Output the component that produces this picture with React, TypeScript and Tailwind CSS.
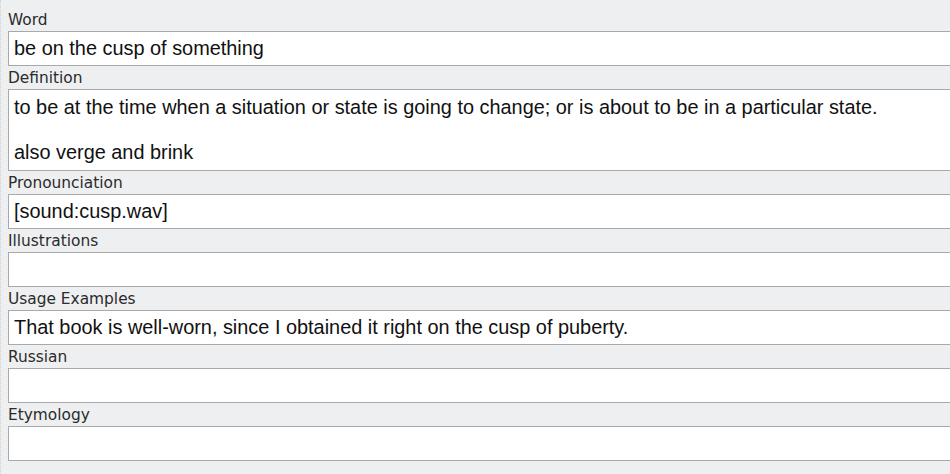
const fields: { label: string; lines: string[] }[] = [
  { label: "Word", lines: ["be on the cusp of something"] },
  {
    label: "Definition",
    lines: [
      "to be at the time when a situation or state is going to change; or is about to be in a particular state.",
      "",
      "also verge and brink",
    ],
  },
  { label: "Pronounciation", lines: ["[sound:cusp.wav]"] },
  { label: "Illustrations", lines: [] },
  {
    label: "Usage Examples",
    lines: ["That book is well-worn, since I obtained it right on the cusp of puberty."],
  },
  { label: "Russian", lines: [] },
  { label: "Etymology", lines: [] },
];

function Field({ label, lines }: { label: string; lines: string[] }) {
  const multi = lines.length > 1;
  return (
    <div>
      <div className="h-[23px] pt-[3px] font-['DejaVu_Sans',sans-serif] text-[15.4px] leading-[19px] text-[#2b2b2b]">
        {label}
      </div>
      <div
        className={
          "-mr-4 border border-[#a9a9a9] bg-white pl-[5px] font-['Liberation_Sans',Arial,sans-serif] text-[19.9px] leading-[22.5px] text-[#111] " +
          (multi ? "py-[6px]" : "h-[35px] pt-[5px]")
        }
      >
        {lines.map((line, i) => (
          <div key={i} className="h-[22.5px] whitespace-nowrap">
            {line}
          </div>
        ))}
      </div>
    </div>
  );
}

export default function App() {
  return (
    <div className="h-[474px] w-[950px] overflow-hidden border-l border-dotted border-[#cfd0d3] bg-[#eeeff1] pl-[7px] pt-[8px]">
      {fields.map((f) => (
        <Field key={f.label} label={f.label} lines={f.lines} />
      ))}
    </div>
  );
}
